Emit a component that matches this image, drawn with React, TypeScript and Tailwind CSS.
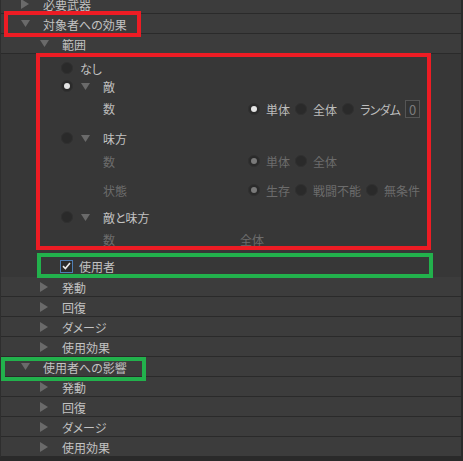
import React from 'react';

type TriProps = { open?: boolean; className?: string };

// small grey disclosure triangle
function Tri({ open, className = '' }: TriProps) {
  return open ? (
    <svg width="9" height="7" viewBox="0 0 9 7" className={className}>
      <path d="M0 0 H9 L4.5 7 Z" fill="#6a6a6a" />
    </svg>
  ) : (
    <svg width="8" height="10" viewBox="0 0 8 10" className={className}>
      <path d="M0 0 L8 5 L0 10 Z" fill="#6a6a6a" />
    </svg>
  );
}

function Radio({ checked, disabled }: { checked?: boolean; disabled?: boolean }) {
  return (
    <span className="w-[12px] h-[12px] rounded-full bg-[#2a2a2a] border border-[#303030] flex items-center justify-center shrink-0">
      {checked && (
        <span className={`w-[6px] h-[6px] rounded-full ${disabled ? 'bg-[#7a7a7a]' : 'bg-[#e4e4e4]'}`} />
      )}
    </span>
  );
}

function Row({ depth, open, label }: { depth: 0 | 1; open?: boolean; label: string }) {
  return (
    <div className="h-[20px] border-b border-[#2a2a2a] bg-[#3c3c3c] flex items-center text-[#c2c2c2]">
      <div className={depth === 0 ? 'w-[42px] pl-[20px] flex items-center' : 'w-[61px] pl-[39px] flex items-center'}>
        <Tri open={open} />
      </div>
      <span className="translate-y-[1px]">{label}</span>
    </div>
  );
}

function Option({ label, checked, disabled, tight }: { label: string; checked?: boolean; disabled?: boolean; tight?: boolean }) {
  return (
    <div className="flex items-center gap-[6px] mr-[5px]">
      <Radio checked={checked} disabled={disabled} />
      <span className={`translate-y-[1px] ${tight ? 'tracking-[-0.8px]' : ''} ${disabled ? 'text-[#6c6c6c]' : 'text-[#bdbdbd]'}`}>{label}</span>
    </div>
  );
}

export default function App() {
  return (
    <div className="relative w-[463px] h-[461px] overflow-hidden bg-[#2a2a2a] text-[12px] leading-none font-['Noto_Sans_CJK_JP','Noto_Sans',sans-serif] [font-feature-settings:'palt']">
      <div className="w-[461px] border-l border-[#2e2e2e]">
        <div className="-mt-[6px]">
          <Row depth={0} label="必要武器" />
        </div>
        <Row depth={0} open label="対象者への効果" />
        <Row depth={1} open label="範囲" />

        {/* range body */}
        <div className="h-[223px] bg-[#373737] pt-[5px]">
          <div className="h-[18px] flex items-center pl-[60px] gap-[7px] text-[#c2c2c2]">
            <Radio />
            <span className="translate-y-[1px]">なし</span>
          </div>
          <div className="h-[18px] flex items-center pl-[60px] text-[#c2c2c2]">
            <Radio checked />
            <Tri open className="ml-[8px]" />
            <span className="ml-[13px] translate-y-[1px]">敵</span>
          </div>
          <div className="h-[34px] flex items-start pt-[4px] pl-[102px]">
            <span className="w-[145px] h-[18px] flex items-center text-[#bababa] translate-y-[1px]">数</span>
            <div className="mt-[1px] flex items-center">
              <Option label="単体" checked />
              <Option label="全体" />
              <Option label="ランダム" tight />
              <span className="w-[15px] h-[18px] border border-[#555] bg-[#333] flex items-center justify-center text-[#7c7c7c] text-[13px]">0</span>
            </div>
          </div>
          <div className="h-[18px] flex items-center pl-[60px] text-[#c2c2c2]">
            <Radio />
            <Tri open className="ml-[8px]" />
            <span className="ml-[13px] translate-y-[1px]">味方</span>
          </div>
          <div className="h-[28px] flex items-center pl-[102px]">
            <span className="w-[145px] text-[#6c6c6c] translate-y-[1px]">数</span>
            <Option label="単体" checked disabled />
            <Option label="全体" disabled />
          </div>
          <div className="h-[30px] flex items-center pl-[102px]">
            <span className="w-[145px] text-[#6c6c6c] translate-y-[1px]">状態</span>
            <Option label="生存" checked disabled />
            <Option label="戦闘不能" disabled />
            <Option label="無条件" disabled />
          </div>
          <div className="h-[24px] flex items-center pl-[60px] text-[#c2c2c2]">
            <Radio />
            <Tri open className="ml-[8px]" />
            <span className="ml-[13px] translate-y-[1px]">敵と味方</span>
          </div>
          <div className="h-[20px] flex items-center pl-[102px] text-[#6c6c6c]">
            <span className="w-[137px] translate-y-[1px]">数</span>
            <span className="translate-y-[1px]">全体</span>
          </div>
          <div className="h-[22px] mt-[6px] flex items-center pl-[59px] gap-[6px] text-[#c2c2c2]">
            <span className="w-[13px] h-[13px] border border-[#4f7fb5] bg-[#2c2c2c] flex items-center justify-center">
              <svg width="9" height="8" viewBox="0 0 9 8">
                <path d="M1 4.2 L3.4 6.5 L8 1" fill="none" stroke="#ececec" strokeWidth="1.6" />
              </svg>
            </span>
            <span className="translate-y-[1px]">使用者</span>
          </div>
        </div>

        <Row depth={1} label="発動" />
        <Row depth={1} label="回復" />
        <Row depth={1} label="ダメージ" />
        <Row depth={1} label="使用効果" />
        <Row depth={0} open label="使用者への影響" />
        <Row depth={1} label="発動" />
        <Row depth={1} label="回復" />
        <Row depth={1} label="ダメージ" />
        <Row depth={1} label="使用効果" />
      </div>

      {/* annotation frames */}
      <div className="absolute left-[4px] top-[11px] w-[137px] h-[26px] border-[4px] border-[#ed1c24] pointer-events-none" />
      <div className="absolute left-[36px] top-[53px] w-[395px] h-[197px] border-[4px] border-[#ed1c24] pointer-events-none" />
      <div className="absolute left-[37px] top-[253px] w-[396px] h-[25px] border-[4px] border-[#22b14c] pointer-events-none" />
      <div className="absolute left-[1px] top-[357px] w-[145px] h-[24px] border-[4px] border-[#22b14c] pointer-events-none" />
    </div>
  );
}
